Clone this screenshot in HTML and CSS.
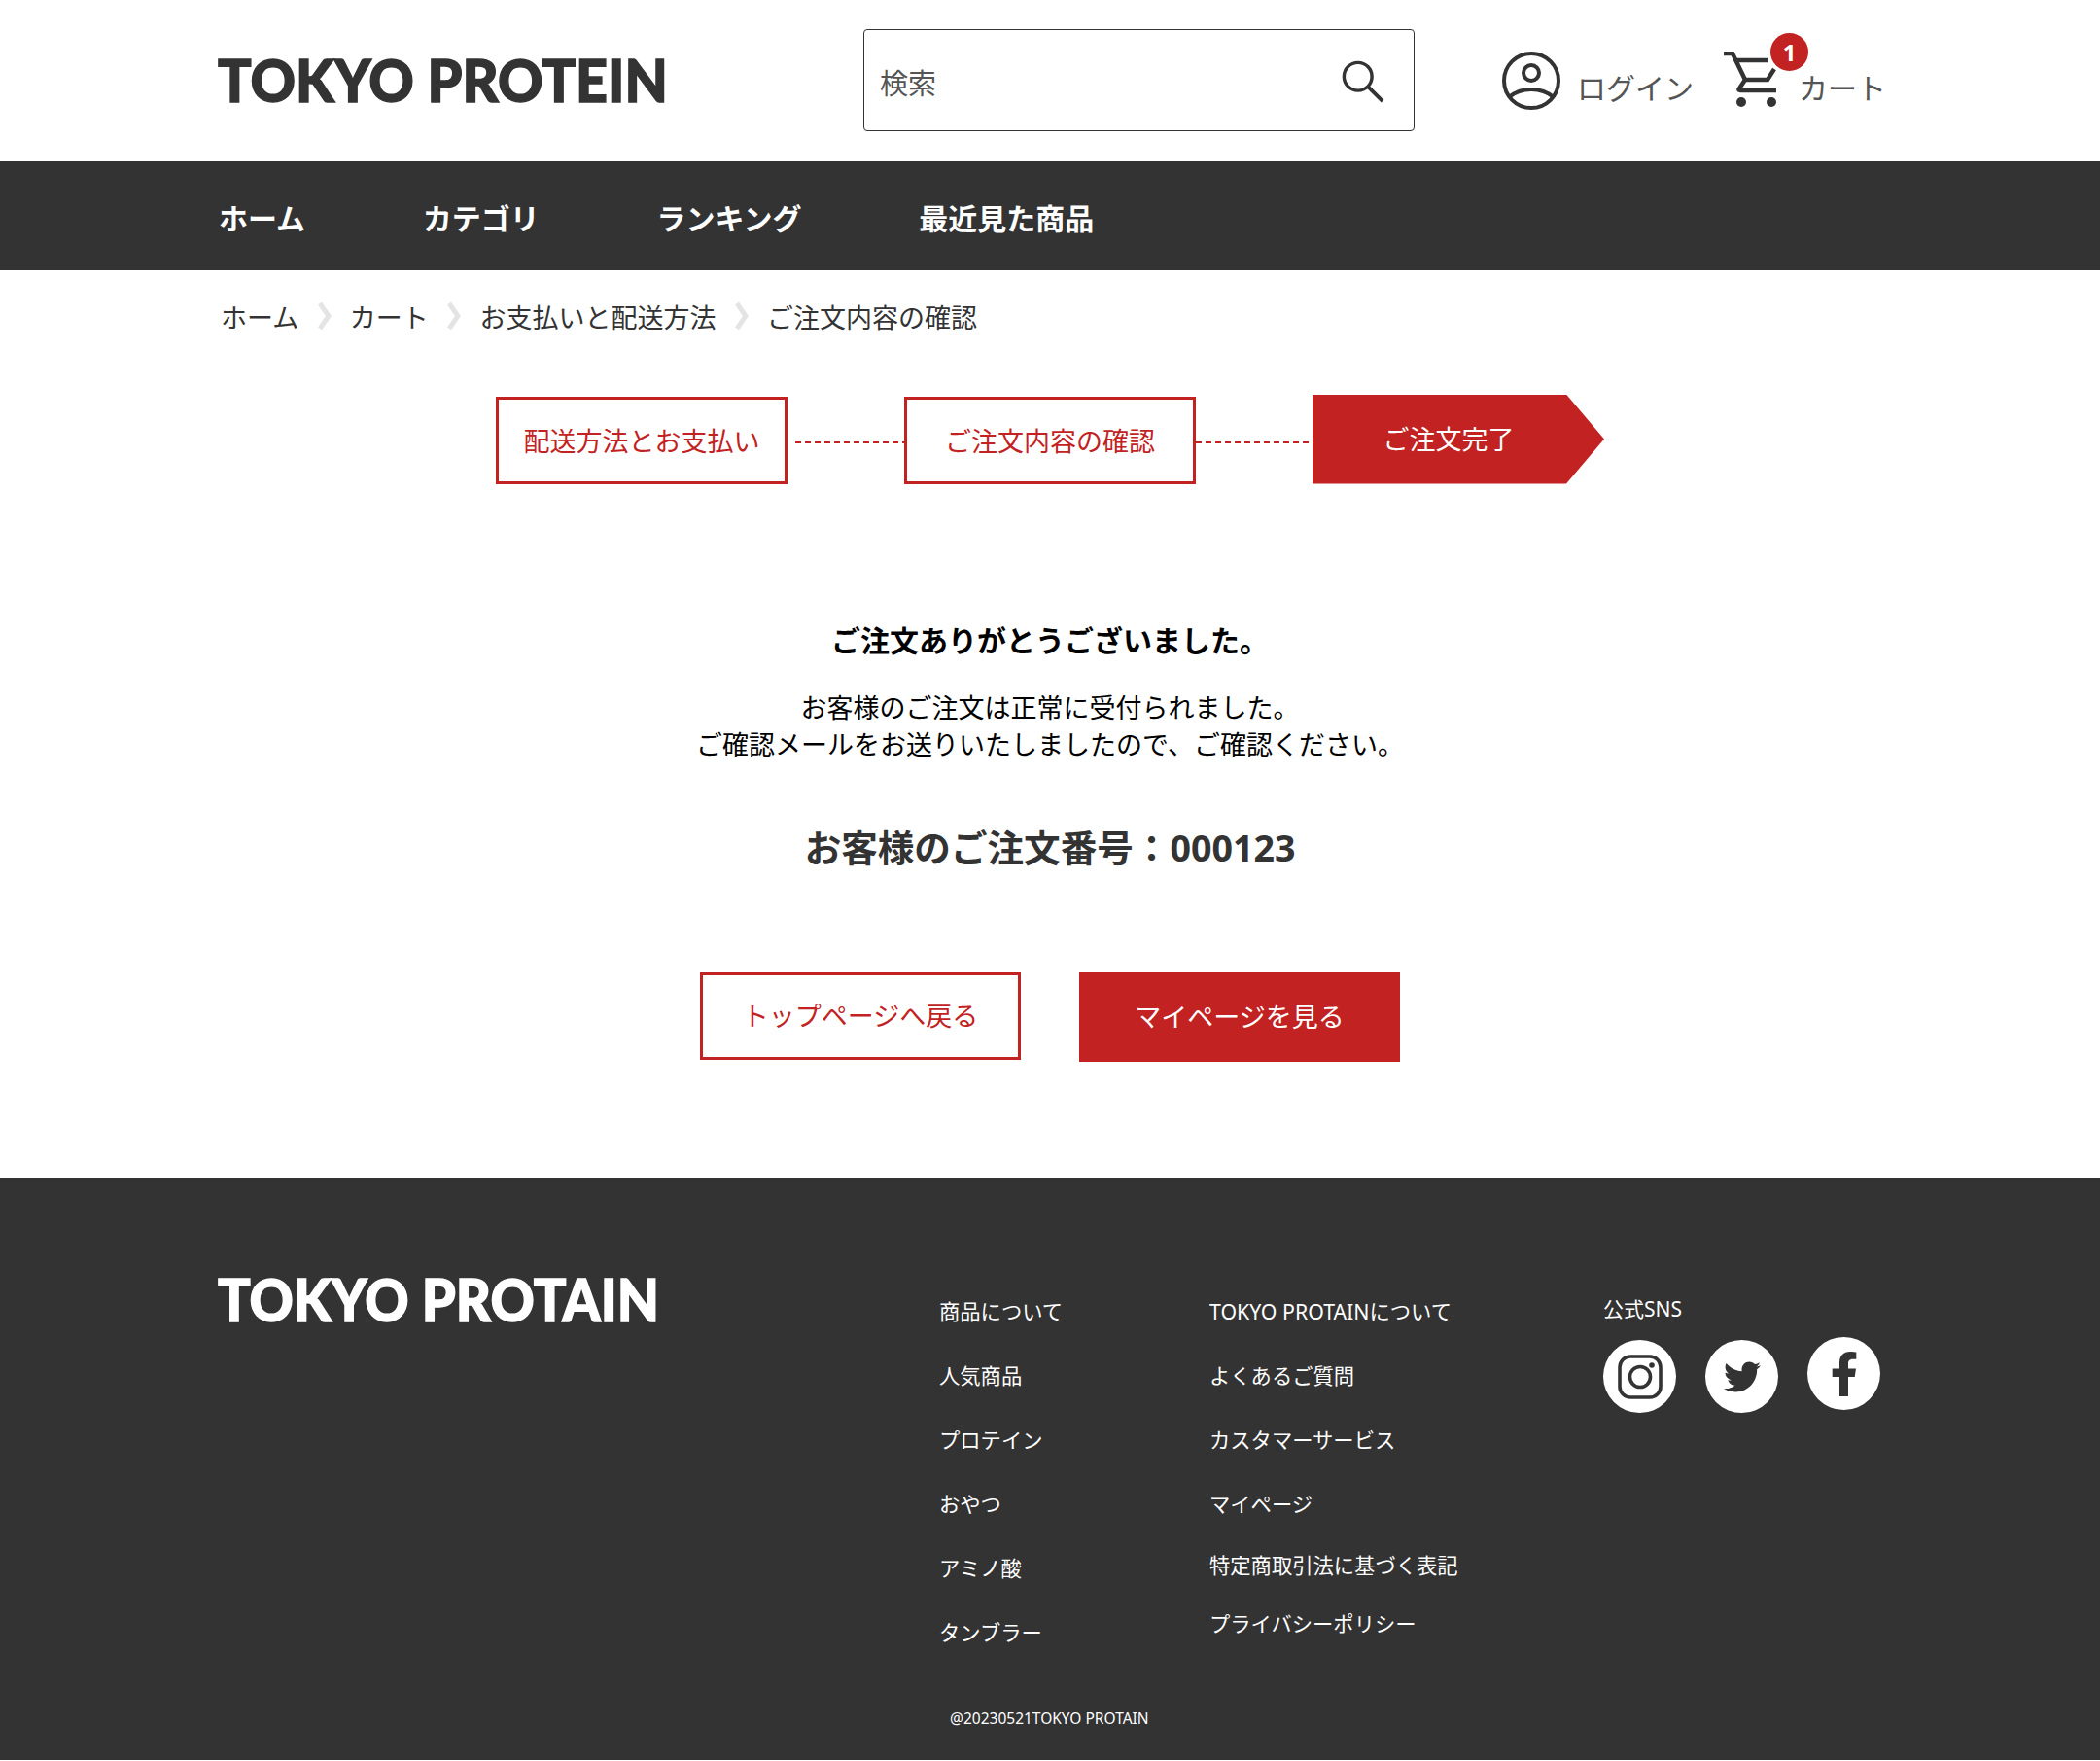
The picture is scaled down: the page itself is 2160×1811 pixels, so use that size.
FILE: index.html
```html
<!DOCTYPE html>
<html lang="ja">
<head>
    <meta charset="UTF-8">
    <meta name="viewport" content="width=device-width, initial-scale=1.0">
    <title>ご注文完了</title>
    <link rel="stylesheet" href="styles.css">
</head>
<body>
    <header class="header">
        <div class="logo-wrap"><div class="logo">TOKYO PROTEIN</div></div>
        <div class="search">
            <span class="search-label">検索</span>
            <svg class="search-icon" viewBox="0 0 48 48" fill="none" stroke="#333" stroke-width="3.6">
                <circle cx="18.5" cy="18.5" r="15"/>
                <path d="M29 29l16 16" stroke-width="4"/>
            </svg>
        </div>
        <a class="login">
            <svg class="user-icon" viewBox="0 0 60 60" fill="none" stroke="#333" stroke-width="4">
                <circle cx="30" cy="30" r="28"/>
                <circle cx="30" cy="22" r="8"/>
                <path d="M7 47c6-5 14-8 23-8s17 3 23 8"/>
            </svg>
            <span>ログイン</span>
        </a>
        <a class="cart">
            <svg class="cart-icon" viewBox="0 0 58 60" fill="none" stroke="#333" stroke-width="4.5">
                <path d="M0 2h9l13 27"/>
                <path d="M12 9h33"/>
                <path d="M22 29h23l7-11"/>
                <path d="M22 29l-6 9c-1 1-1 2 1 2h37"/>
                <circle cx="18" cy="52" r="5" fill="#333" stroke="none"/>
                <circle cx="49" cy="52" r="5" fill="#333" stroke="none"/>
            </svg>
            <span class="cart-badge">1</span>
            <span>カート</span>
        </a>
    </header>

    <nav class="nav">
        <a>ホーム</a>
        <a>カテゴリ</a>
        <a>ランキング</a>
        <a>最近見た商品</a>
    </nav>

    <div class="breadcrumb">
        <span>ホーム</span>
        <svg class="crumb-sep" viewBox="0 0 14 28"><path d="M2 1l9 13-9 13"/></svg>
        <span>カート</span>
        <svg class="crumb-sep" viewBox="0 0 14 28"><path d="M2 1l9 13-9 13"/></svg>
        <span>お支払いと配送方法</span>
        <svg class="crumb-sep" viewBox="0 0 14 28"><path d="M2 1l9 13-9 13"/></svg>
        <span>ご注文内容の確認</span>
    </div>

    <div class="steps">
        <div class="step">配送方法とお支払い</div>
        <div class="step-line step-line-first"></div>
        <div class="step">ご注文内容の確認</div>
        <div class="step-line"></div>
        <div class="step step-current">ご注文完了</div>
    </div>

    <main class="thanks">
        <h1>ご注文ありがとうございました。</h1>
        <p>お客様のご注文は正常に受付られました。<br>ご確認メールをお送りいたしましたので、ご確認ください。</p>
        <h2>お客様のご注文番号：000123</h2>
        <div class="buttons">
            <a class="btn btn-outline">トップページへ戻る</a>
            <a class="btn btn-fill">マイページを見る</a>
        </div>
    </main>

    <footer class="footer">
        <div class="footer-main">
            <div class="logo-wrap footer-logo-wrap"><div class="logo footer-logo">TOKYO PROTAIN</div></div>
            <ul class="footer-list list-one">
                <li>商品について</li>
                <li>人気商品</li>
                <li>プロテイン</li>
                <li>おやつ</li>
                <li>アミノ酸</li>
                <li>タンブラー</li>
            </ul>
            <ul class="footer-list list-two">
                <li>TOKYO PROTAINについて</li>
                <li>よくあるご質問</li>
                <li>カスタマーサービス</li>
                <li>マイページ</li>
                <li class="tight">特定商取引法に基づく表記</li>
                <li class="tight">プライバシーポリシー</li>
            </ul>
            <div class="sns">
                <div class="sns-title">公式SNS</div>
                <div class="sns-icons">
                    <a class="sns-icon">
                        <svg viewBox="0 0 46 46" fill="none" stroke="#333">
                            <rect x="2" y="2" width="42" height="42" rx="11" stroke-width="3.6"/>
                            <circle cx="23" cy="23" r="10.5" stroke-width="3.6"/>
                            <circle cx="35" cy="11" r="2.8" fill="#333" stroke="none"/>
                        </svg>
                    </a>
                    <a class="sns-icon">
                        <svg class="tw" viewBox="0 0 512 512"><path fill="#333" d="M459.37 151.716c.325 4.548.325 9.097.325 13.645 0 138.72-105.583 298.558-298.558 298.558-59.452 0-114.68-17.219-161.137-47.106 8.447.974 16.568 1.299 25.34 1.299 49.055 0 94.213-16.568 130.274-44.832-46.132-.975-84.792-31.188-98.112-72.772 6.498.974 12.995 1.624 19.818 1.624 9.421 0 18.843-1.3 27.614-3.573-48.081-9.747-84.143-51.98-84.143-102.985v-1.299c13.969 7.797 30.214 12.67 47.431 13.319-28.264-18.843-46.781-51.005-46.781-87.391 0-19.492 5.197-37.36 14.294-52.954 51.655 63.675 129.3 105.258 216.365 109.807-1.624-7.797-2.599-15.918-2.599-24.04 0-57.828 46.782-104.934 104.934-104.934 30.213 0 57.502 12.67 76.67 33.137 23.715-4.548 46.456-13.32 66.599-25.34-7.798 24.366-24.366 44.833-46.132 57.827 21.117-2.273 41.584-8.122 60.426-16.243-14.292 20.791-32.161 39.308-52.628 54.253z"/></svg>
                    </a>
                    <a class="sns-icon sns-fb">
                        <svg class="fb" viewBox="0 0 320 512"><path fill="#333" d="M279.14 288l14.22-92.66h-88.91v-60.13c0-25.35 12.42-50.06 52.24-50.06h40.42V6.26S260.43 0 225.36 0c-73.22 0-121.08 44.38-121.08 124.72v70.62H22.89V288h81.39v224h100.17V288z"/></svg>
                    </a>
                </div>
            </div>
        </div>
        <div class="copyright">@20230521TOKYO PROTAIN</div>
    </footer>
</body>
</html>
```

FILE: styles.css
```css
* {
    box-sizing: border-box;
}
body {
    font-family: "Noto Sans", "Noto Sans CJK JP", sans-serif;
    margin: 0;
    padding: 0;
    background-color: #fff;
    color: #333;
}
ul {
    list-style: none;
    margin: 0;
    padding: 0;
}
h1, h2, p {
    margin: 0;
}

/* header */
.header {
    display: flex;
    align-items: flex-start;
    height: 166px;
    padding-left: 224px;
}
.logo-wrap {
    width: 664px;
    padding-top: 52px;
}
.logo {
    font-family: Lato, sans-serif;
    font-weight: 900;
    font-size: 60px;
    line-height: 60px;
    -webkit-text-stroke: 1.4px #333;
    color: #333;
    white-space: nowrap;
    transform: scaleX(0.957);
    transform-origin: left center;
}
.search {
    display: flex;
    align-items: center;
    justify-content: space-between;
    width: 567px;
    height: 105px;
    margin-top: 30px;
    padding: 2px 29px 0 16px;
    border: 1.5px solid #333;
    border-radius: 4px;
}
.search-label {
    font-size: 29px;
    color: #555;
}
.search-icon {
    width: 46px;
    height: 46px;
}
.login, .cart {
    position: relative;
    display: flex;
    align-items: flex-start;
    margin-top: 53px;
    font-size: 30px;
    line-height: 40px;
    color: #555;
}
.login {
    margin-left: 90px;
    width: 228px;
}
.login span, .cart span {
    margin-top: 18px;
}
.user-icon {
    width: 60px;
    height: 60px;
    margin-right: 17px;
}
.cart-icon {
    width: 58px;
    height: 60px;
    margin-right: 19px;
}
.cart .cart-badge {
    position: absolute;
    left: 48px;
    top: -19px;
    width: 39px;
    height: 39px;
    margin: 0;
    border-radius: 50%;
    background: #c22222;
    color: #fff;
    font-size: 24px;
    font-weight: 700;
    line-height: 39px;
    text-align: center;
}

/* nav */
.nav {
    display: flex;
    gap: 120.7px;
    height: 112px;
    padding: 3px 0 0 225px;
    background: #333;
    color: #fff;
    font-size: 30px;
    font-weight: 700;
    line-height: 112px;
}

/* breadcrumb */
.breadcrumb {
    display: flex;
    align-items: center;
    gap: 19.3px;
    height: 40px;
    margin-top: 27px;
    padding-left: 227px;
    font-size: 27px;
    color: #333;
}
.crumb-sep {
    width: 14px;
    height: 28px;
    fill: none;
    stroke: #e4e4e4;
    stroke-width: 5;
}

/* steps */
.steps {
    display: flex;
    align-items: center;
    margin-top: 62px;
    padding-left: 510px;
    height: 92px;
}
.step {
    display: flex;
    align-items: center;
    justify-content: center;
    width: 300px;
    height: 90px;
    padding-bottom: 2px;
    border: 3px solid #c22222;
    color: #c22222;
    font-size: 27px;
}
.step-line {
    width: 120px;
    height: 2px;
    margin-top: 3px;
    background: repeating-linear-gradient(90deg, #c22222 0 6px, transparent 6px 10px);
}
.step-line-first {
    width: 112px;
    margin-left: 8px;
}
.step-current {
    height: 92px;
    margin-top: -3px;
    padding-right: 20px;
    border: none;
    background: #c22222;
    color: #fff;
    clip-path: polygon(0 0, 87% 0, 100% 50%, 87% 100%, 0 100%);
}

/* main */
.thanks {
    height: 712px;
    padding-top: 138px;
    text-align: center;
    color: #000;
}
.thanks h1 {
    font-size: 30px;
    font-weight: 700;
    line-height: 44px;
}
.thanks p {
    margin-top: 28px;
    font-size: 27px;
    line-height: 38px;
}
.thanks h2 {
    margin-top: 59px;
    font-size: 37.6px;
    font-weight: 700;
    line-height: 56px;
    color: #333;
}
.buttons {
    display: flex;
    justify-content: center;
    gap: 60px;
    margin-top: 100px;
}
.btn {
    display: flex;
    align-items: center;
    justify-content: center;
    width: 330px;
    height: 90px;
    padding-bottom: 4px;
    font-size: 27px;
}
.btn-outline {
    border: 3px solid #c22222;
    color: #c22222;
}
.btn-fill {
    height: 92px;
    background: #c22222;
    color: #fff;
}

/* footer */
.footer {
    height: 599px;
    margin-bottom: 1px;
    background: #333;
    color: #fff;
}
.footer-main {
    display: flex;
    align-items: flex-start;
    height: 540px;
    padding-left: 224px;
}
.footer-logo-wrap {
    width: 742px;
    padding-top: 95px;
}
.footer-logo {
    color: #fff;
    -webkit-text-stroke: 1.4px #fff;
    transform: scaleX(0.932);
}
.footer-list {
    margin-top: 105px;
    font-size: 21.3px;
    line-height: 66px;
}
.footer-list li {
    height: 66px;
    white-space: nowrap;
}
.list-one {
    width: 278px;
}
.list-two {
    width: 405px;
}
.list-two .tight {
    height: 60px;
    line-height: 60px;
}
.sns {
    margin-top: 116px;
}
.sns-title {
    font-size: 21px;
    line-height: 38px;
}
.sns-icons {
    display: flex;
    gap: 30px;
    margin-top: 13px;
}
.sns-icon {
    display: flex;
    align-items: center;
    justify-content: center;
    width: 75px;
    height: 75px;
    border-radius: 50%;
    background: #fff;
}
.sns-fb {
    margin-top: -3px;
}
.sns-icon svg {
    width: 46px;
    height: 46px;
}
.sns-icon .tw {
    width: 38px;
    height: 38px;
}
.sns-icon .fb {
    width: 30px;
    height: 46px;
}
.copyright {
    margin-top: 4px;
    padding-left: 977px;
    font-size: 15.5px;
    line-height: 24px;
}
```
